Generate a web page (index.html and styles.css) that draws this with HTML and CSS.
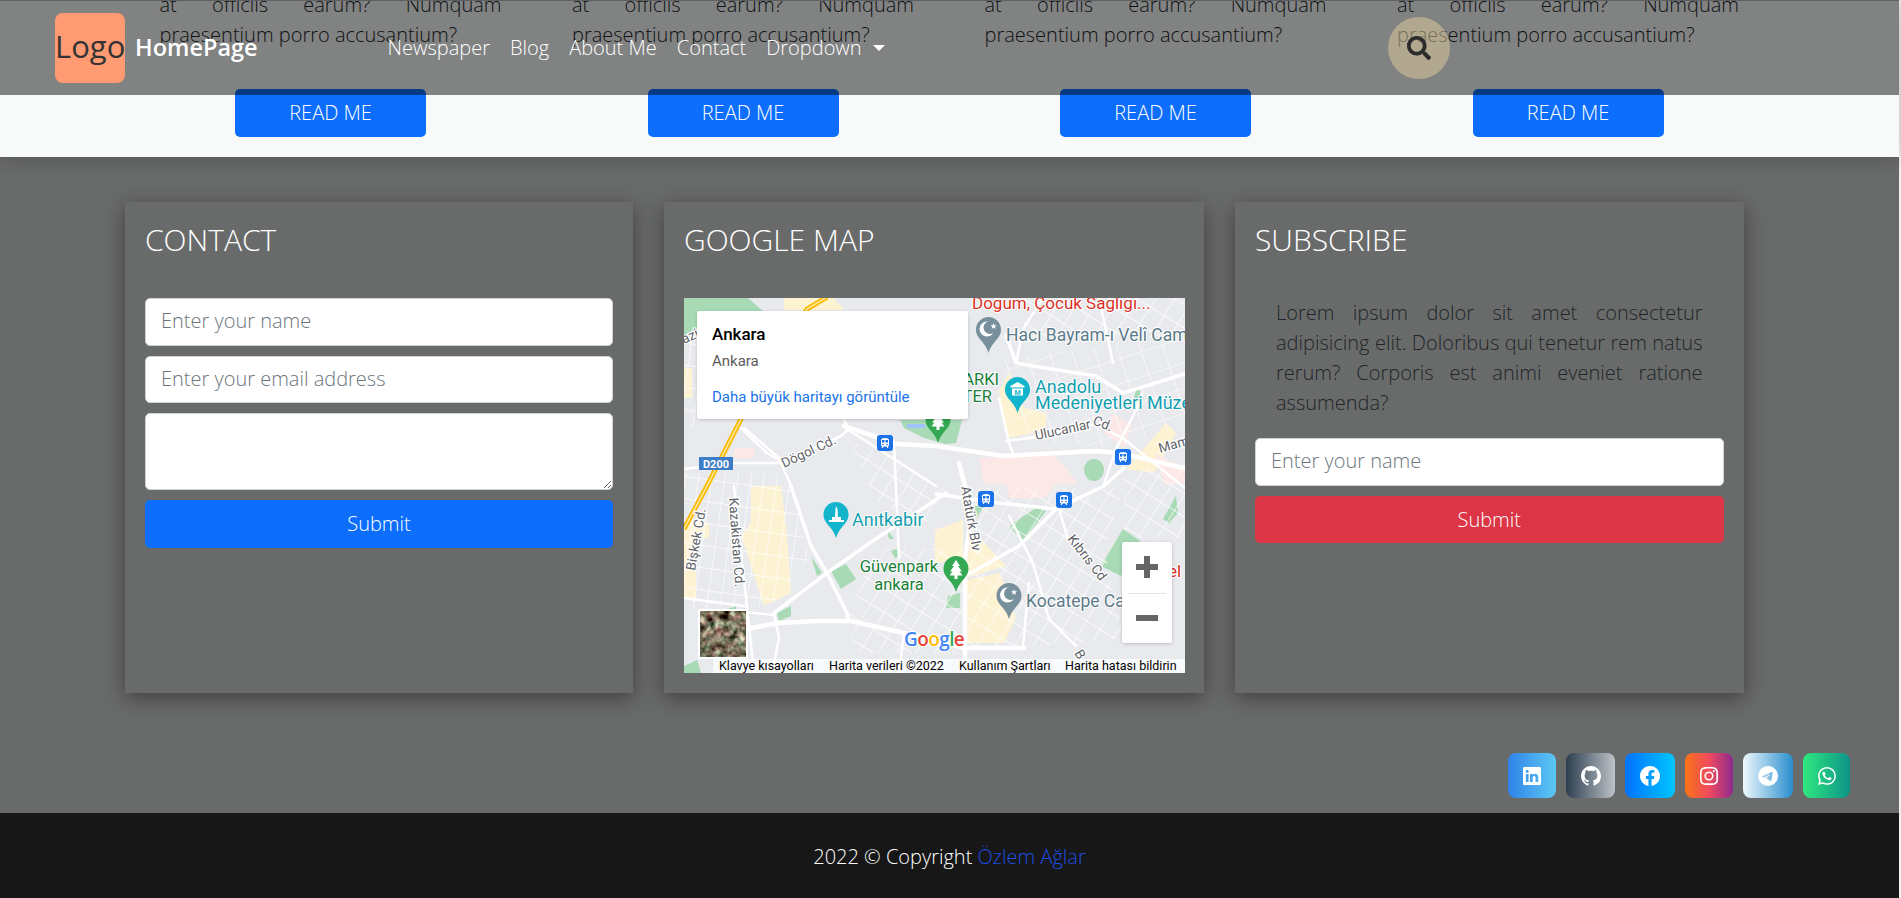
FILE: index.html
```html
<!DOCTYPE html>
<html lang="en">
<head>
    <meta charset="UTF-8">
    <meta name="viewport" content="width=device-width, initial-scale=1.0">
    <title>HomePage</title>
    <link rel="stylesheet" href="styles.css">
</head>
<body>
<div class="page">

    <nav class="navbar">
        <a class="logo">Logo</a>
        <a class="brand">HomePage</a>
        <ul class="nav-links">
            <li>Newspaper</li>
            <li>Blog</li>
            <li>About Me</li>
            <li>Contact</li>
            <li class="dropdown">Dropdown</li>
        </ul>
        <button class="search-btn" aria-label="Search">
            <svg viewBox="0 0 512 512" width="24" height="24"><path fill="#2b2b2b" d="M505 442.7L405.3 343c-4.5-4.5-10.6-7-17-7H372c27.6-35.3 44-79.7 44-128C416 93.1 322.9 0 208 0S0 93.1 0 208s93.1 208 208 208c48.3 0 92.7-16.4 128-44v16.3c0 6.4 2.5 12.5 7 17l99.7 99.7c9.4 9.4 24.6 9.4 33.9 0l28.3-28.3c9.4-9.4 9.4-24.6.1-34zM208 336c-70.7 0-128-57.2-128-128 0-70.7 57.2-128 128-128 70.7 0 128 57.2 128 128 0 70.7-57.2 128-128 128z"/></svg>
        </button>
    </nav>

    <section class="articles">
        <div class="article">
            <p>at officiis earum? Numquam praesentium porro accusantium?</p>
            <a class="read-btn">READ ME</a>
        </div>
        <div class="article">
            <p>at officiis earum? Numquam praesentium porro accusantium?</p>
            <a class="read-btn">READ ME</a>
        </div>
        <div class="article">
            <p>at officiis earum? Numquam praesentium porro accusantium?</p>
            <a class="read-btn">READ ME</a>
        </div>
        <div class="article">
            <p>at officiis earum? Numquam praesentium porro accusantium?</p>
            <a class="read-btn">READ ME</a>
        </div>
    </section>

    <section class="contact-area">
        <div class="cards">
            <div class="card">
                <h3>CONTACT</h3>
                <form class="form">
                    <input type="text" placeholder="Enter your name">
                    <input type="email" placeholder="Enter your email address">
                    <textarea></textarea>
                    <button type="button" class="btn btn-blue">Submit</button>
                </form>
            </div>

            <div class="card">
                <h3>GOOGLE MAP</h3>
                <div class="map">
                    <svg class="map-svg" viewBox="0 0 501 375" width="501" height="375">
                        <defs>
                            <pattern id="blocks8" width="13" height="22" patternUnits="userSpaceOnUse" patternTransform="rotate(8)"><path d="M0 0H13M0 0V22" stroke="#fff" stroke-width="1.3" fill="none"/></pattern>
                            <pattern id="blocks30" width="16" height="20" patternUnits="userSpaceOnUse" patternTransform="rotate(32)"><path d="M0 0H16M0 0V20" stroke="#fff" stroke-width="1.3" fill="none"/></pattern>
                            <pattern id="blocksN" width="22" height="24" patternUnits="userSpaceOnUse" patternTransform="rotate(-18)"><path d="M0 0H22M0 0V24" stroke="#fff" stroke-width="1.2" fill="none"/></pattern>
                            <filter id="sat" x="0" y="0" width="100%" height="100%" color-interpolation-filters="sRGB">
                                <feTurbulence type="fractalNoise" baseFrequency="0.13" numOctaves="3" seed="7"/>
                                <feColorMatrix values="1.2 0.8 0 0 -0.52  0.9 1.1 0 0 -0.56  0.9 0.9 0 0 -0.54  0 0 0 0 1"/>
                            </filter>
                            <path id="pin" d="M12.5 0C5.6 0 0 5.6 0 12.5c0 5.5 3 8.5 6 12 2.7 3.2 5 6.5 6.5 11.5 1.5-5 3.8-8.3 6.5-11.5 3-3.5 6-6.5 6-12C25 5.6 19.4 0 12.5 0z"/>
                            <g id="mosque">
                                <use href="#pin" fill="#78909c"/>
                                <circle cx="11" cy="12" r="7.5" fill="#fff"/>
                                <circle cx="14" cy="10.5" r="6.5" fill="#78909c"/>
                                <path d="M17.5 6l.9 2.2 2.3.1-1.8 1.4.7 2.2-2-1.3-1.9 1.3.6-2.2-1.8-1.4 2.3-.1z" fill="#fff"/>
                            </g>
                            <g id="tree">
                                <use href="#pin" fill="#34a853"/>
                                <path d="M12.5 4l4 6h-2l4 5.5h-2.5l3 4H14v3.5h-3V19.500H6l3-4H6.500l4-5.500h-2z" fill="#fff"/>
                            </g>
                            <g id="metro">
                                <rect width="16" height="16" rx="3" fill="#1a73e8"/>
                                <path d="M4 5q0-2 4-2t4 2v5q0 1.500-1.500 1.500l1 1.500h-1.200l-1-1.500H6.700l-1 1.500H4.500l1-1.500Q4 11.500 4 10z" fill="#fff"/>
                                <path d="M5 5h2.500v2.500H5zM8.500 5H11v2.500H8.500z" fill="#1a73e8"/>
                                <circle cx="6" cy="9.500" r=".8" fill="#1a73e8"/><circle cx="10" cy="9.500" r=".8" fill="#1a73e8"/>
                            </g>
                        </defs>

                        <rect width="501" height="375" fill="#e8eaed"/>

                        <g fill="#fdf3d2">
                            <path d="M67 188H97L103 235 107 295 80 308 67 268 57 238 67 225z"/>
                            <path d="M283 240H296L322 268 282 280z"/>
                            <path d="M283 282L316 275 332 320 320 345H283z"/>
                            <path d="M251 232L279 222V260L251 265z"/>
                            <path d="M315 92L325 75 340 110 362 115 362 132 325 140 318 118z"/>
                            <path d="M442 171L482 125 492 135 470 175z"/>
                            <path d="M0 225H25V240H12V300H0z"/>
                            <path d="M100 0H150L160 12H100z"/>
                            <path d="M0 70H8V100H0z"/>
                        </g>
                        <g fill="#fce8e6">
                            <path d="M428 115L448 128 440 150 420 135z"/>
                            <path d="M295 160L370 157 395 186 300 186z"/>
                            <path d="M322 186H372L360 200H325z"/>
                            <path d="M470 155L501 170V186H480z"/>
                            <path d="M50 150H70V160H50z"/>
                        </g>
                        <g fill="#a8dab5">
                            <path d="M0 0H64L80 14H13V30L0 38z"/>
                            <path d="M216 122H278L272 145 262 146 240 140 220 130z"/>
                            <ellipse cx="410" cy="172" rx="10" ry="11"/>
                            <path d="M325 228L352 210 362 213 339 243z"/>
                            <path d="M417 268L439 231 459 245 437 278z"/>
                            <path d="M479 221L492 198 494 215 485 225z"/>
                            <path d="M147 273L162 266 172 281 157 291z"/>
                            <path d="M127 258L138 275 133 278z"/>
                            <path d="M93 315L107 308V318L95 323z"/>
                            <path d="M203 231L210 241H205z"/>
                            <path d="M207 253L213 250 216 258 211 260z"/>
                            <path d="M452 91L456 90 456 101H450z"/>
                            <path d="M289 208L302 206 292 220z"/>
                            <path d="M0 368L13 362 17 375H0z"/>
                            <path d="M264 298L276 295V310H262z"/>
                            <path d="M45 310L52 308 52 318 45 318z"/>
                        </g>
                        <path d="M223 126h18v4h-18z" fill="#a1c2fa"/>

                        <g stroke="none">
                            <path d="M0 175H105L125 260 85 310H0z" fill="url(#blocks8)"/>
                            <path d="M190 250H280V355H170L165 320z" fill="url(#blocks30)"/>
                            <path d="M283 190H440L420 250 440 340 283 355z" fill="url(#blocks30)"/>
                            <path d="M440 175L501 165V240H440z" fill="url(#blocks30)"/>
                            <path d="M320 60L501 40V130L430 150 320 140z" fill="url(#blocksN)"/>
                            <path d="M340 0H501V40H340z" fill="url(#blocks30)"/>
                            <path d="M165 140L260 190 240 230 190 200z" fill="url(#blocks30)"/>
                            <path d="M0 45H13V130H0z" fill="url(#blocks8)"/>
                        </g>

                        <g fill="none" stroke="#fff" stroke-linecap="round" stroke-linejoin="round">
                            <g stroke-width="4.500">
                                <path d="M160 128L213 146 252 148 319 158 412 153 435 155 504 171"/>
                                <path d="M281 375V260L288 215 275 165"/>
                                <path d="M63 331L93 325 133 323 167 323 220 335 281 350 340 350"/>
                            </g>
                            <g stroke-width="3.500">
                                <path d="M90 315L143 275 190 242 232 215 262 195"/>
                                <path d="M281 278L335 248 372 211 420 188 440 170"/>
                                <path d="M107 188L127 248 143 275 163 315 165 323"/>
                                <path d="M252 196L315 205 372 211"/>
                                <path d="M322 38L332 65 349 68 412 78 439 95 504 75"/>
                            </g>
                            <g stroke-width="2.500">
                                <path d="M57 130L83 155 100 165 157 138 165 131 160 122"/>
                                <path d="M163 131L252 188"/>
                                <path d="M0 171L47 165 100 165"/>
                                <path d="M322 143L359 138 412 126 440 141"/>
                                <path d="M449 118L432 151 420 186"/>
                                <path d="M459 95L449 118"/>
                                <path d="M415 0L429 65"/>
                                <path d="M359 0L339 31 332 65"/>
                                <path d="M325 218L349 265 365 321 392 348"/>
                                <path d="M375 211L384 241"/>
                                <path d="M345 285L339 348"/>
                                <path d="M90 315L95 340 88 375"/>
                                <path d="M50 313L90 317"/>
                                <path d="M107 188L95 160 60 130"/>
                                <path d="M0 300L60 308"/>
                                <path d="M50 188L70 375"/>
                                <path d="M315 100L325 145 330 158"/>
                                <path d="M440 141L501 190"/>
                                <path d="M210 145L215 260"/>
                                <path d="M220 335L215 375"/>
                            </g>
                        </g>

                        <path d="M0 231L23 188 57 121 123 11 143 -1" fill="none" stroke="#fbbc04" stroke-width="5"/>
                        <path d="M0 231L23 188 57 121 123 11 143 -1" fill="none" stroke="#feefc3" stroke-width="1.200"/>
                        <rect x="15" y="159" width="34" height="13" fill="#3f7cc8"/>
                        <text x="32" y="170" class="map-road-no" text-anchor="middle">D200</text>

                        <text x="288" y="11" class="map-label" fill="#d93025" font-size="17">Doğum, Çocuk Sağlığı...</text>
                        <use href="#mosque" x="292" y="19"/>
                        <text x="322" y="43" class="map-label" fill="#5b7a8a" font-size="17.500">Hacı Bayram-ı Velî Camii</text>
                        <text x="315" y="87" class="map-label" fill="#188038" font-size="16.500" text-anchor="end">ARKI</text>
                        <text x="308" y="104" class="map-label" fill="#188038" font-size="16.500" text-anchor="end">TER</text>
                        <use href="#pin" x="321" y="79" fill="#12b5cb"/>
                        <path d="M333.500 84l7 4v1.500h-14V88zM328 90.500h11v7h-11z" fill="#fff"/>
                        <text x="333.500" y="96.500" font-family="Roboto" font-size="7" font-weight="700" text-anchor="middle" fill="#12b5cb">M</text>
                        <text x="351" y="95" class="map-label" fill="#129eaf" font-size="18">Anadolu</text>
                        <text x="351" y="111" class="map-label" fill="#129eaf" font-size="18">Medeniyetleri Müzesi</text>
                        <use href="#tree" x="241.500" y="109"/>
                        <use href="#pin" x="139.500" y="204" fill="#12b5cb"/>
                        <path d="M152 208l1.500 3 .5 8h3v3h3v2h-15v-2h3v-3h3l.5-8z" fill="#fff"/>
                        <text x="168" y="228" class="map-label" fill="#129eaf" font-size="18">Anıtkabir</text>
                        <text x="215" y="274" class="map-label" fill="#188038" font-size="16.500" text-anchor="middle">Güvenpark</text>
                        <text x="215" y="292" class="map-label" fill="#188038" font-size="16.500" text-anchor="middle">ankara</text>
                        <use href="#tree" x="259.500" y="258"/>
                        <use href="#mosque" x="312.500" y="285"/>
                        <text x="342" y="309" class="map-label" fill="#5b7a8a" font-size="17.500">Kocatepe Camii</text>
                        <text x="484" y="279" class="map-label" fill="#d93025" font-size="17">el</text>

                        <use href="#metro" x="193" y="137"/>
                        <use href="#metro" x="431" y="151"/>
                        <use href="#metro" x="294" y="193"/>
                        <use href="#metro" x="372" y="194"/>

                        <g class="map-road">
                            <text transform="translate(100 170) rotate(-25)">Dögol Cd.</text>
                            <text transform="translate(352 142) rotate(-12)">Ulucanlar</text>
                            <text transform="translate(408 126) rotate(22)">Cd.</text>
                            <text transform="translate(45 200) rotate(86)">Kazakistan Cd.</text>
                            <text transform="translate(11 273) rotate(-80)">Bişkek Cd.</text>
                            <text transform="translate(277 189) rotate(80)">Atatürk Blv</text>
                            <text transform="translate(383 241) rotate(52)">Kıbrıs Cd</text>
                            <text transform="translate(476 155) rotate(-16)">Mam</text>
                            <text transform="translate(0 46) rotate(-25)">azi</text>
                            <text transform="translate(390 355) rotate(60)">B</text>
                        </g>

                        <text x="220" y="348" class="map-google"><tspan fill="#4285f4">G</tspan><tspan fill="#ea4335">o</tspan><tspan fill="#fbbc04">o</tspan><tspan fill="#4285f4">g</tspan><tspan fill="#34a853">l</tspan><tspan fill="#ea4335">e</tspan></text>

                        <rect x="14" y="311" width="50" height="50" rx="2" fill="#fff"/>
                        <rect x="16" y="313" width="46" height="46" filter="url(#sat)"/>
                    </svg>

                    <div class="info-window">
                        <div class="info-title">Ankara</div>
                        <div class="info-address">Ankara</div>
                        <a class="info-link">Daha büyük haritayı görüntüle</a>
                    </div>

                    <div class="zoom-control">
                        <button class="zoom-btn zoom-plus" aria-label="Zoom in"></button>
                        <button class="zoom-btn zoom-minus" aria-label="Zoom out"></button>
                    </div>

                    <div class="map-footer">
                        <span>Klavye kısayolları</span>
                        <span>Harita verileri ©2022</span>
                        <span>Kullanım Şartları</span>
                        <span>Harita hatası bildirin</span>
                    </div>
                </div>
            </div>

            <div class="card">
                <h3>SUBSCRIBE</h3>
                <p class="subscribe-text">Lorem ipsum dolor sit amet consectetur adipisicing elit. Doloribus qui tenetur rem natus rerum? Corporis est animi eveniet ratione assumenda?</p>
                <form class="form">
                    <input type="text" placeholder="Enter your name">
                    <button type="button" class="btn btn-red">Submit</button>
                </form>
            </div>
        </div>

        <div class="socials">
            <a class="social s-linkedin"><svg viewBox="0 0 16 16" width="18" height="18"><path d="M0 1.146C0 .513.526 0 1.175 0h13.65C15.474 0 16 .513 16 1.146v13.708c0 .633-.526 1.146-1.175 1.146H1.175C.526 16 0 15.487 0 14.854V1.146zm4.943 12.248V6.169H2.542v7.225h2.401zm-1.2-8.212c.837 0 1.358-.554 1.358-1.248-.015-.709-.52-1.248-1.342-1.248-.822 0-1.359.54-1.359 1.248 0 .694.521 1.248 1.327 1.248h.016zm4.908 8.212V9.359c0-.216.016-.432.08-.586.173-.431.568-.878 1.232-.878.869 0 1.216.662 1.216 1.634v3.865h2.401V9.25c0-2.22-1.184-3.252-2.764-3.252-1.274 0-1.845.7-2.165 1.193v.025h-.016a5.54 5.54 0 0 1 .016-.025V6.169h-2.4c.03.678 0 7.225 0 7.225h2.4z"/></svg></a>
            <a class="social s-github"><svg viewBox="0 0 16 16" width="20" height="20"><path d="M8 0C3.58 0 0 3.58 0 8c0 3.54 2.29 6.53 5.47 7.59.4.07.55-.17.55-.38 0-.19-.01-.82-.01-1.49-2.01.37-2.53-.49-2.69-.94-.09-.23-.48-.94-.82-1.13-.28-.15-.68-.52-.01-.53.63-.01 1.08.58 1.23.82.72 1.21 1.87.87 2.33.66.07-.52.28-.87.51-1.07-1.78-.2-3.64-.89-3.64-3.95 0-.87.31-1.59.82-2.15-.08-.2-.36-1.02.08-2.12 0 0 .67-.21 2.2.82.64-.18 1.32-.27 2-.27.68 0 1.36.09 2 .27 1.53-1.04 2.2-.82 2.2-.82.44 1.1.16 1.92.08 2.12.51.56.82 1.27.82 2.15 0 3.07-1.87 3.75-3.65 3.95.29.25.54.73.54 1.48 0 1.07-.01 1.93-.01 2.2 0 .21.15.46.55.38A8.012 8.012 0 0 0 16 8c0-4.42-3.58-8-8-8z"/></svg></a>
            <a class="social s-facebook"><svg viewBox="0 0 16 16" width="20" height="20"><path d="M16 8.049c0-4.446-3.582-8.05-8-8.05C3.58 0-.002 3.603-.002 8.05c0 4.017 2.926 7.347 6.75 7.951v-5.625h-2.03V8.05H6.75V6.275c0-2.017 1.195-3.131 3.022-3.131.876 0 1.791.157 1.791.157v1.98h-1.009c-.993 0-1.303.621-1.303 1.258v1.51h2.218l-.354 2.326H9.25V16c3.824-.604 6.75-3.934 6.75-7.951z"/></svg></a>
            <a class="social s-instagram"><svg viewBox="0 0 16 16" width="18" height="18"><path d="M8 0C5.829 0 5.556.01 4.703.048 3.85.088 3.269.222 2.76.42a3.917 3.917 0 0 0-1.417.923A3.927 3.927 0 0 0 .42 2.76C.222 3.268.087 3.85.048 4.7.01 5.555 0 5.827 0 8.001c0 2.172.01 2.444.048 3.297.04.852.174 1.433.372 1.942.205.526.478.972.923 1.417.444.445.89.719 1.416.923.51.198 1.09.333 1.942.372C5.555 15.99 5.827 16 8 16s2.444-.01 3.298-.048c.851-.04 1.434-.174 1.943-.372a3.916 3.916 0 0 0 1.416-.923c.445-.445.718-.891.923-1.417.197-.509.332-1.09.372-1.942C15.99 10.445 16 10.173 16 8s-.01-2.445-.048-3.299c-.04-.851-.175-1.433-.372-1.941a3.926 3.926 0 0 0-.923-1.417A3.911 3.911 0 0 0 13.24.42c-.51-.198-1.092-.333-1.943-.372C10.443.01 10.172 0 7.998 0h.003zm-.717 1.442h.718c2.136 0 2.389.007 3.232.046.78.035 1.204.166 1.486.275.373.145.64.319.92.599.28.28.453.546.598.92.11.281.24.705.275 1.485.039.843.047 1.096.047 3.231s-.008 2.389-.047 3.232c-.035.78-.166 1.203-.275 1.485a2.47 2.47 0 0 1-.599.919c-.28.28-.546.453-.92.598-.28.11-.704.24-1.485.276-.843.038-1.096.047-3.232.047s-2.39-.009-3.233-.047c-.78-.036-1.203-.166-1.485-.276a2.478 2.478 0 0 1-.92-.598 2.48 2.48 0 0 1-.6-.92c-.109-.281-.24-.705-.275-1.485-.038-.843-.046-1.096-.046-3.233 0-2.136.008-2.388.046-3.231.036-.78.166-1.204.276-1.486.145-.373.319-.64.599-.92.28-.28.546-.453.92-.598.282-.11.705-.24 1.485-.276.738-.034 1.024-.044 2.515-.045v.002zm4.988 1.328a.96.96 0 1 0 0 1.92.96.96 0 0 0 0-1.92zm-4.27 1.122a4.109 4.109 0 1 0 0 8.217 4.109 4.109 0 0 0 0-8.217zm0 1.441a2.667 2.667 0 1 1 0 5.334 2.667 2.667 0 0 1 0-5.334z"/></svg></a>
            <a class="social s-telegram"><svg viewBox="0 0 16 16" width="20" height="20"><path d="M16 8A8 8 0 1 1 0 8a8 8 0 0 1 16 0zM8.287 5.906c-.778.324-2.334.994-4.666 2.01-.378.15-.577.298-.595.442-.03.243.275.339.69.47l.175.055c.408.133.958.288 1.243.294.26.006.549-.1.868-.32 2.179-1.471 3.304-2.214 3.374-2.23.05-.012.12-.026.166.016.047.041.042.12.037.141-.03.129-1.227 1.241-1.846 1.817-.193.18-.33.307-.358.336a8.154 8.154 0 0 1-.188.186c-.38.366-.664.64.015 1.088.327.216.589.393.85.571.284.194.568.387.936.629.093.06.183.125.27.187.331.236.63.448.997.414.214-.02.435-.22.547-.82.265-1.417.786-4.486.906-5.751a1.426 1.426 0 0 0-.013-.315.337.337 0 0 0-.114-.217.526.526 0 0 0-.31-.093c-.3.005-.763.166-2.984 1.09z"/></svg></a>
            <a class="social s-whatsapp"><svg viewBox="0 0 16 16" width="18" height="18"><path d="M13.601 2.326A7.854 7.854 0 0 0 7.994 0C3.627 0 .068 3.558.064 7.926c0 1.399.366 2.76 1.057 3.965L0 16l4.204-1.102a7.933 7.933 0 0 0 3.79.965h.004c4.368 0 7.926-3.558 7.93-7.93A7.898 7.898 0 0 0 13.6 2.326zM7.994 14.521a6.573 6.573 0 0 1-3.356-.92l-.24-.144-2.494.654.666-2.433-.156-.251a6.56 6.56 0 0 1-1.007-3.505c0-3.626 2.957-6.584 6.591-6.584a6.56 6.56 0 0 1 4.66 1.931 6.557 6.557 0 0 1 1.928 4.66c-.004 3.639-2.961 6.592-6.592 6.592zm3.615-4.934c-.197-.099-1.17-.578-1.353-.646-.182-.065-.315-.099-.445.099-.133.197-.513.646-.627.775-.114.133-.232.148-.43.05-.197-.1-.836-.308-1.592-.985-.59-.525-.985-1.175-1.103-1.372-.114-.198-.011-.304.088-.403.087-.088.197-.232.296-.346.1-.114.133-.198.198-.33.065-.134.034-.248-.015-.347-.05-.099-.445-1.076-.612-1.47-.16-.389-.323-.335-.445-.34-.114-.007-.247-.007-.38-.007a.729.729 0 0 0-.529.247c-.182.198-.691.677-.691 1.654 0 .977.71 1.916.81 2.049.098.133 1.394 2.132 3.383 2.992.47.205.84.326 1.129.418.475.152.904.129 1.246.08.38-.058 1.171-.48 1.338-.943.164-.464.164-.86.114-.943-.049-.084-.182-.133-.38-.232z"/></svg></a>
        </div>
    </section>

    <footer class="footer">
        2022 © Copyright <a class="footer-link">Özlem Ağlar</a>
    </footer>
</div>
</body>
</html>
```

FILE: styles.css
```css
* {
    box-sizing: border-box;
}

html, body {
    margin: 0;
    height: 100%;
    overflow: hidden;
}

body {
    background-color: #f1f1f1;
    padding-right: 2px;
    font-family: "Open Sans", sans-serif;
    font-weight: 300;
    font-size: 20px;
    line-height: 30px;
    color: #212529;
}

.page {
    position: relative;
    height: 898px;
    display: flex;
    flex-direction: column;
}

/* navbar lies over the scrolled page */
.navbar {
    position: absolute;
    top: 0;
    left: 0;
    right: 0;
    height: 95px;
    z-index: 10;
    display: flex;
    align-items: center;
    padding-left: 55px;
    background-color: rgba(0, 0, 0, 0.48);
    border-top: 1px solid #5f6063;
}

.logo {
    width: 70px;
    height: 70px;
    background-color: #ff9a73;
    border-radius: 8px;
    font-size: 31px;
    font-weight: 400;
    line-height: 66px;
    text-align: center;
    white-space: nowrap;
    color: #333;
}

.brand {
    margin-left: 10px;
    font-size: 23.500px;
    font-weight: 600;
    line-height: 28px;
    margin-bottom: 2px;
    color: #fff;
}

.nav-links {
    display: flex;
    gap: 20px;
    list-style: none;
    margin: 0 0 0 130px;
    padding: 0;
    color: #fff;
}

.dropdown::after {
    content: "";
    display: inline-block;
    margin-left: 11px;
    vertical-align: 4px;
    border-top: 6px solid #fff;
    border-left: 6px solid transparent;
    border-right: 6px solid transparent;
}

.search-btn {
    position: absolute;
    left: 1388px;
    top: 16px;
    width: 62px;
    height: 62px;
    padding: 0;
    border: none;
    border-radius: 50%;
    background-color: rgba(225, 205, 155, 0.5);
    display: flex;
    align-items: center;
    justify-content: center;
}

.articles {
    height: 157px;
    flex: none;
    overflow: hidden;
    position: relative;
    z-index: 1;
    background-color: #f8faf9;
    box-shadow: 0 0 22px rgba(0, 0, 0, 0.25);
    padding: 0 0 20px 159.500px;
    display: grid;
    grid-template-columns: repeat(4, 342px);
    column-gap: 70.500px;
    align-content: end;
}

.article {
    display: flex;
    flex-direction: column;
    align-items: center;
}

.article p {
    margin: 0 0 39px;
    text-align: justify;
}

.read-btn {
    width: 191px;
    height: 48px;
    background-color: #0d6efd;
    border-radius: 5px;
    color: #fff;
    line-height: 48px;
    text-align: center;
}

.contact-area {
    flex: 1;
    background-color: #696b6a;
    padding: 45px 49px 15px 125px;
    display: flex;
    flex-direction: column;
}

.cards {
    display: grid;
    grid-template-columns: 508px 540px 508.500px;
    column-gap: 31px;
}

.card {
    height: 491px;
    padding: 20px;
    background-color: #696b6a;
    box-shadow: 0 5px 20px rgba(0, 0, 0, 0.42);
}

.card h3 {
    margin: 0 0 40px;
    font-size: 30px;
    font-weight: 300;
    line-height: 36px;
    color: #fff;
}

.form {
    display: flex;
    flex-direction: column;
    gap: 10px;
}

.form input,
.form textarea {
    display: block;
    width: 100%;
    height: 47.500px;
    padding: 7px 15px 9px;
    background-color: #fff;
    border: 1px solid #ced4da;
    border-radius: 5px;
    font-family: inherit;
    font-size: 20px;
    font-weight: 300;
    line-height: 30px;
}

.form textarea {
    height: 77px;
}

.form ::placeholder {
    color: #6c757d;
}

.btn {
    height: 47.500px;
    border: none;
    border-radius: 5px;
    font-family: inherit;
    font-size: 20px;
    font-weight: 300;
    color: #fff;
}

.btn-blue {
    background-color: #0d6efd;
}

.btn-red {
    background-color: #dc3545;
}

.subscribe-text {
    margin: 0 0 20px;
    padding: 0 21px;
    text-align: justify;
}

.map {
    position: relative;
    width: 501px;
    height: 375px;
    overflow: hidden;
    font-family: Roboto, sans-serif;
    font-weight: 400;
}

.map-svg {
    display: block;
}

.map-label {
    font-family: Roboto, sans-serif;
    stroke: #fff;
    stroke-width: 2px;
    paint-order: stroke;
    stroke-linejoin: round;
}

.map-road text {
    font-family: Roboto, sans-serif;
    font-size: 13.500px;
    fill: #5f6368;
    stroke: #fff;
    stroke-width: 2.500px;
    paint-order: stroke;
}

.map-road-no {
    font-family: Roboto, sans-serif;
    font-size: 11px;
    font-weight: 700;
    fill: #fff;
}

.map-google {
    font-family: "Open Sans", sans-serif;
    font-size: 19px;
    font-weight: 600;
    letter-spacing: -0.6px;
    stroke: #fff;
    stroke-width: 2px;
    paint-order: stroke;
}

.info-window {
    position: absolute;
    left: 13px;
    top: 13px;
    width: 271px;
    height: 108px;
    padding: 13px 15px;
    background-color: #fff;
    border-radius: 2px;
    box-shadow: 0 1px 4px -1px rgba(0, 0, 0, 0.3);
}

.info-title {
    font-size: 17px;
    font-weight: 500;
    line-height: 20px;
    color: #000;
}

.info-address {
    margin-top: 8px;
    font-size: 15px;
    line-height: 18px;
    color: #5b5b5b;
}

.info-link {
    display: block;
    margin-top: 18px;
    font-size: 15px;
    line-height: 18px;
    color: #1a73e8;
}

.zoom-control {
    position: absolute;
    left: 438px;
    top: 244px;
    width: 50px;
    height: 101px;
    display: flex;
    flex-direction: column;
    background-color: #fff;
    border-radius: 2px;
    box-shadow: 0 1px 4px -1px rgba(0, 0, 0, 0.3);
}

.zoom-btn {
    position: relative;
    flex: 1;
    padding: 0;
    border: none;
    background: none;
}

.zoom-plus::before,
.zoom-plus::after,
.zoom-minus::before {
    content: "";
    position: absolute;
    background-color: #666;
}

.zoom-plus::before,
.zoom-minus::before {
    left: 14px;
    top: 22px;
    width: 22px;
    height: 6px;
}

.zoom-plus::after {
    left: 22px;
    top: 14px;
    width: 6px;
    height: 22px;
}

.zoom-minus::after {
    content: "";
    position: absolute;
    left: 6px;
    right: 6px;
    top: 0;
    height: 1px;
    background-color: #e6e6e6;
}

.map-footer {
    position: absolute;
    left: 29px;
    right: 0;
    bottom: 0;
    height: 14px;
    display: flex;
    background-color: rgba(255, 255, 255, 0.7);
    font-size: 12.500px;
    line-height: 14px;
    color: #000;
    white-space: nowrap;
}

.map-footer span:nth-child(1) { margin-left: 6px; width: 110px; }
.map-footer span:nth-child(2) { width: 130px; }
.map-footer span:nth-child(3) { width: 106px; }

.socials {
    margin-top: 60px;
    display: flex;
    justify-content: flex-end;
    gap: 10px;
}

.social {
    height: 45px;
    border-radius: 8px;
    display: flex;
    align-items: center;
    justify-content: center;
}

.social svg {
    fill: #fff;
}

.s-linkedin {
    width: 48px;
    background: linear-gradient(90deg, #3083e8, #5cc8f4);
}

.s-github {
    width: 49px;
    background: linear-gradient(90deg, #2c3e50, #bdc3c7);
}

.s-facebook {
    width: 50px;
    background: linear-gradient(90deg, #0072ff, #00c6ff);
}

.s-instagram {
    width: 48px;
    background: linear-gradient(90deg, #f97316, #f04a5f 50%, #8e2a8f);
}

.s-telegram {
    width: 50px;
    background: linear-gradient(90deg, #eef8fb, #2a8fcf);
}

.s-whatsapp {
    width: 47px;
    background: linear-gradient(90deg, #2fe87e, #0d9488);
}

.footer {
    flex: none;
    height: 85px;
    background-color: #171717;
    color: #fff;
    font-size: 20px;
    font-weight: 300;
    line-height: 87px;
    text-align: center;
}

.footer-link {
    color: #1d4de0;
}
```
